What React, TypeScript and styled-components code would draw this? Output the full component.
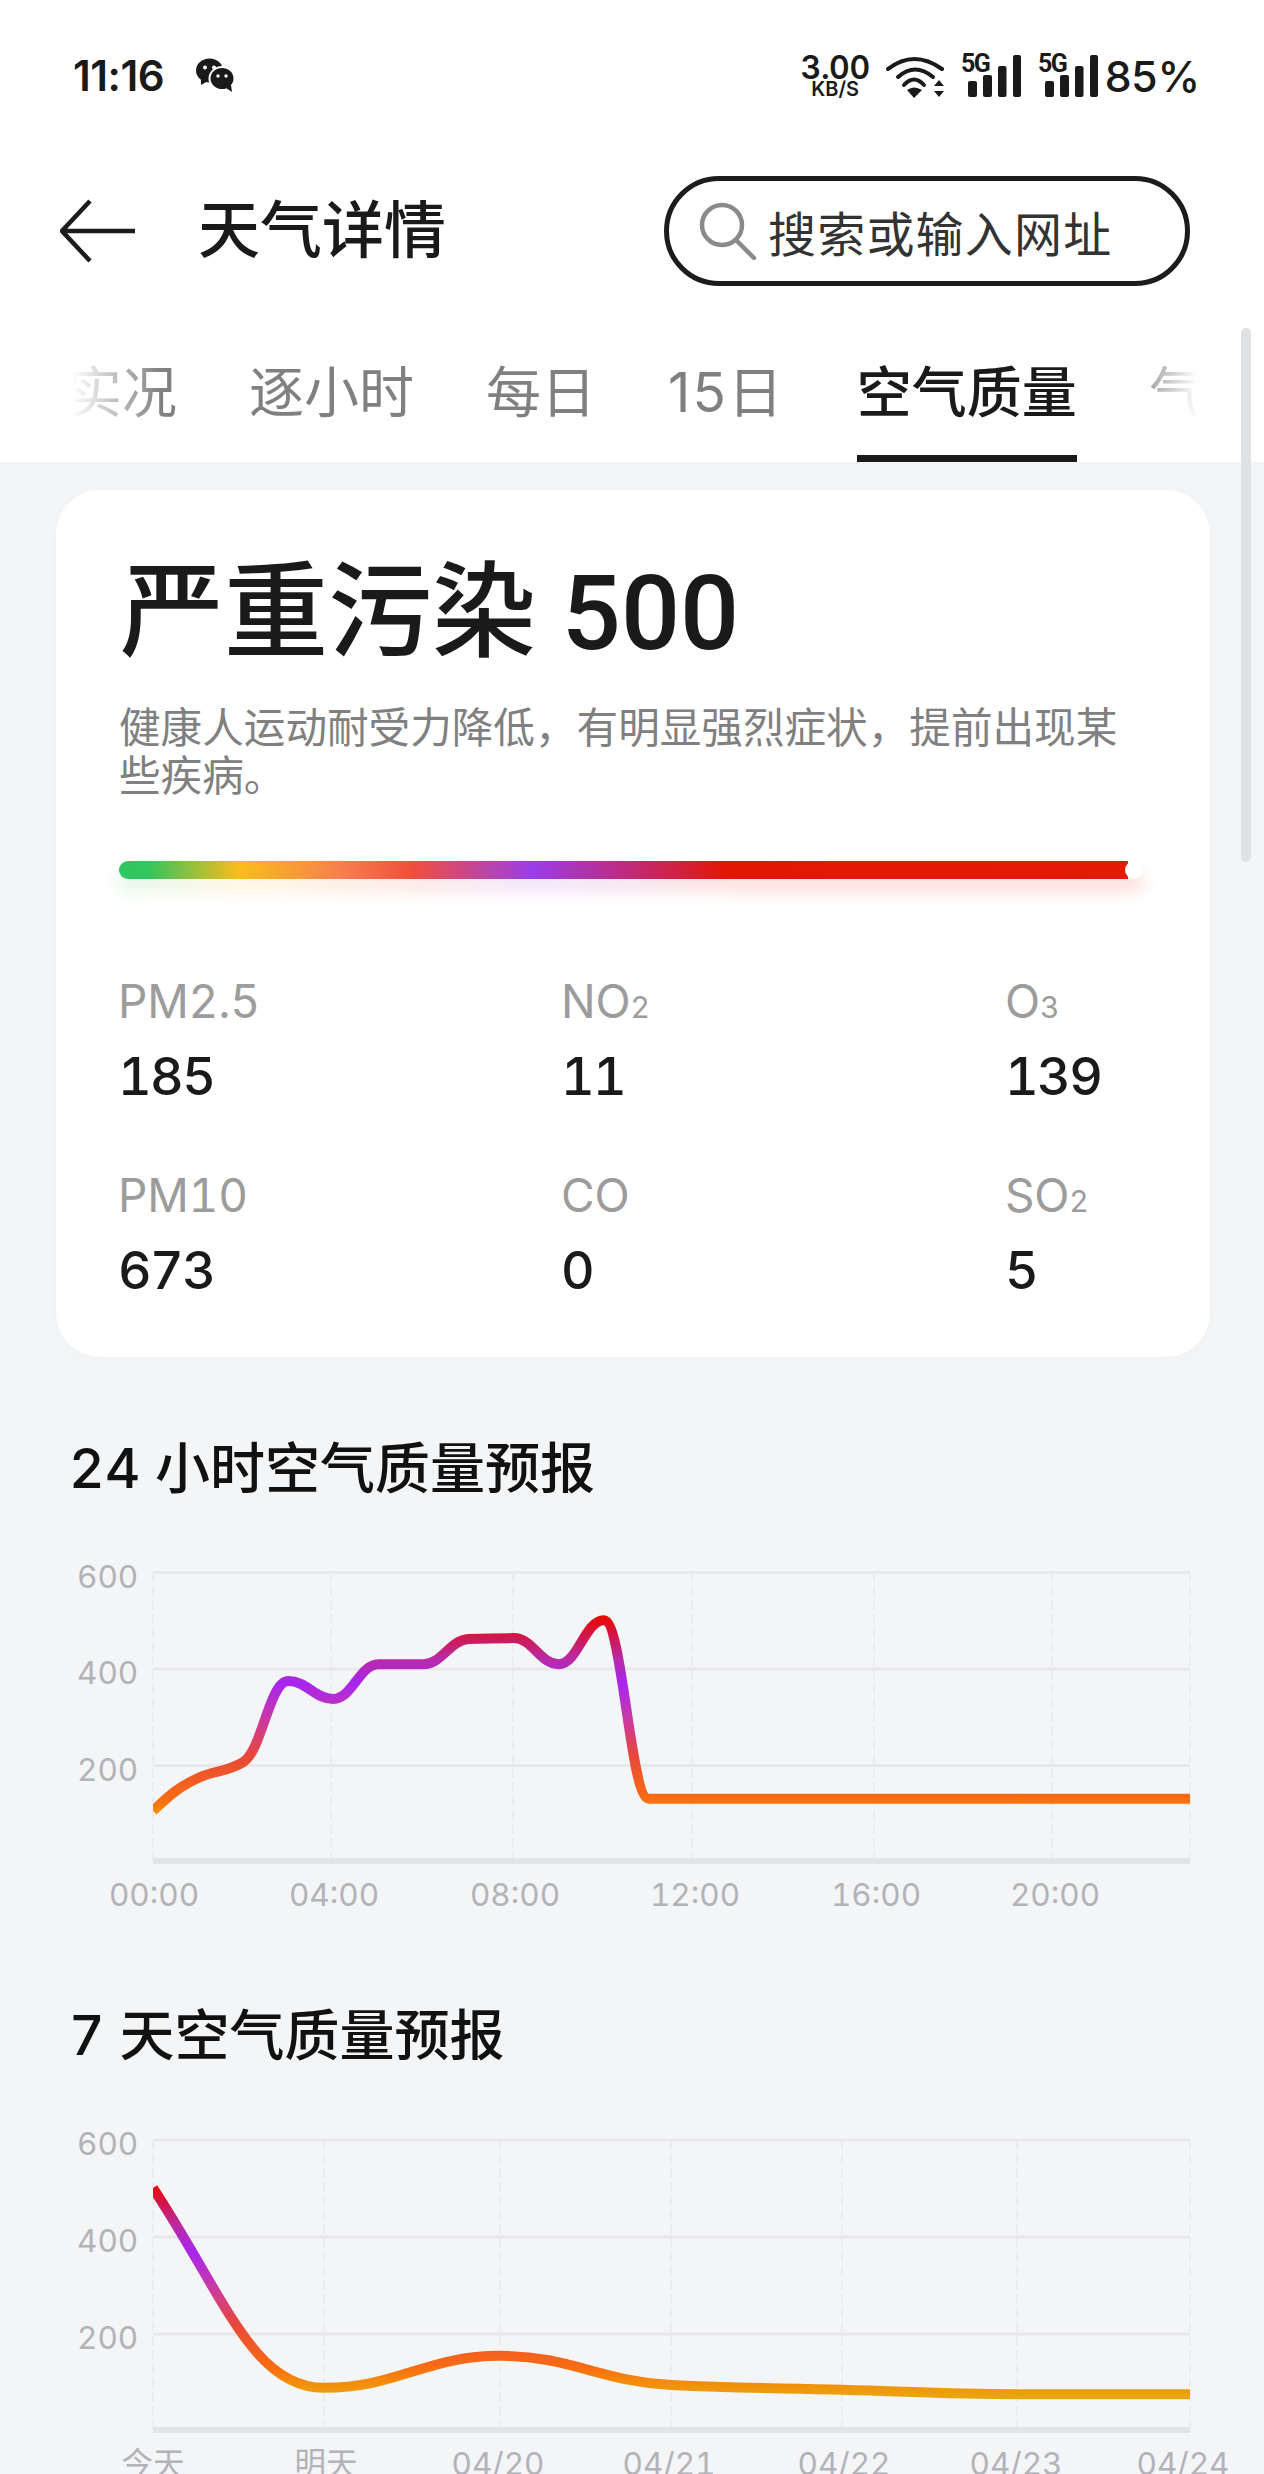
import React from 'react';
import styled, { createGlobalStyle } from 'styled-components';

const Global = createGlobalStyle`
  html, body { margin: 0; padding: 0; height: 2474px; overflow: hidden; background: #f4f5f7; }
  body {
    font-family: Inter, "Noto Sans CJK SC", sans-serif;
    font-variant-numeric: tabular-nums;
    color: #1a1a1a;
  }
`;

const Page = styled.div`
  position: relative;
  width: 1264px;
  height: 2474px;
  overflow: hidden;
`;

const Header = styled.header`
  background: #fff;
  height: 462px;
`;

const StatusBar = styled.div`
  height: 150px;
  padding: 0 65px 0 73px;
  box-sizing: border-box;
  display: flex;
  align-items: center;
`;

const Time = styled.span`
  font-size: 42px;
  font-weight: 600;
  font-variant-numeric: normal;
  letter-spacing: -0.5px;
  margin-right: 32px;
`;

const StatusRight = styled.div`
  margin-left: auto;
  display: flex;
  align-items: center;
  margin-top: 2px;
`;

const Speed = styled.div`
  width: 70px;
  display: flex;
  flex-direction: column;
  align-items: center;
  font-weight: 600;
  margin-right: 16px;
  strong { font-size: 32px; line-height: 27px; font-weight: 600; letter-spacing: -0.4px; }
  span { font-size: 20px; line-height: 17px; }
`;

const SignalWrap = styled.svg`
  display: block;
  margin-left: 17px;
  overflow: visible;
  text {
    font-family: Roboto, sans-serif;
    font-weight: 700;
    font-size: 25px;
    letter-spacing: -1.6px;
    fill: #1a1a1a;
  }
`;

const Battery = styled.span`
  font-size: 43px;
  font-weight: 500;
  letter-spacing: -1.2px;
  margin-left: 6px;
`;

const NavRow = styled.div`
  margin-top: 26px;
  height: 110px;
  padding: 0 74px 0 60px;
  display: flex;
  align-items: center;
`;

const NavTitle = styled.h1`
  margin: 0 0 0 62px;
  font-size: 62px;
  font-weight: 500;
  line-height: 1;
  color: #1a1a1a;
`;

const SearchBox = styled.div`
  margin-left: auto;
  width: 526px;
  height: 110px;
  box-sizing: border-box;
  border: 5px solid #1c1c1c;
  border-radius: 55px;
  display: flex;
  align-items: center;
  padding-left: 28px;
  span {
    margin-left: 11px;
    font-size: 48px;
    letter-spacing: 1.2px;
    color: #333;
  }
`;

const TabStrip = styled.nav`
  margin: 68px 66px 0 71px;
  height: 108px;
  overflow: hidden;
  display: flex;
  gap: 72px;
  -webkit-mask-image: linear-gradient(to right, transparent 0, #000 90px, #000 calc(100% - 70px), transparent 100%);
  mask-image: linear-gradient(to right, transparent 0, #000 90px, #000 calc(100% - 70px), transparent 100%);
`;

const Tab = styled.div<{ $active?: boolean; $track?: number }>`
  flex: none;
  height: 108px;
  box-sizing: border-box;
  padding-bottom: 25px;
  line-height: 76px;
  font-size: 55px;
  font-variant-numeric: normal;
  letter-spacing: ${p => p.$track || 0}px;
  font-weight: ${p => (p.$active ? 500 : 400)};
  color: ${p => (p.$active ? '#1a1a1a' : '#808080')};
  border-bottom: 7px solid ${p => (p.$active ? '#1a1a1a' : 'transparent')};
  &:first-child { margin-left: -4px; }
`;

const Scrollbar = styled.div`
  position: absolute;
  left: 1241px;
  top: 328px;
  width: 10px;
  height: 534px;
  border-radius: 5px;
  background: #e0e1e3;
`;

const Card = styled.section`
  margin: 28px 54px 0 56px;
  padding: 62px 64px 54px 62px;
  background: #fff;
  border-radius: 44px;
  box-shadow: 0 2px 14px rgba(0, 0, 0, 0.02);
`;

const Level = styled.h2`
  margin: 0 0 0 2px;
  font-family: Roboto, "Noto Sans CJK SC", sans-serif;
  font-size: 104px;
  line-height: 124px;
  font-weight: 500;
  color: #1a1a1a;
  white-space: nowrap;
`;

const Advice = styled.p`
  margin: 28px 0 0 1px;
  font-size: 41.6px;
  line-height: 48px;
  color: #808080;
`;

const Scale = styled.div`
  position: relative;
  margin: 61px 0 0 1px;
  width: 1009px;
  height: 18px;
`;

const ScaleTrack = styled.div`
  position: relative;
  height: 18px;
  border-radius: 9px 0 0 9px;
  background: linear-gradient(to right, #2ec763 0%, #36c45c 3%, #fcbc1c 12%, #f57f4f 22%, #f0503a 29%, #9b3de8 41%, #d3203a 56%, #e31605 60%, #e51a05 100%);
`;

const ScaleGlow = styled.div`
  position: absolute;
  left: 0;
  right: -14px;
  top: 12px;
  height: 18px;
  opacity: 0.16;
  filter: blur(9px);
  background: linear-gradient(to right, #2ec763 0%, #fcbc1c 12%, #f0503a 29%, #9b3de8 41%, #e51a05 60%, #e51a05 100%);
`;

const Knob = styled.div`
  position: absolute;
  right: -15px;
  top: 0;
  width: 18px;
  height: 18px;
  border-radius: 50%;
  background: #fff;
`;

const StatGrid = styled.div`
  margin-top: 93px;
  display: grid;
  grid-template-columns: 443px 444px auto;
  row-gap: 57px;
`;

const StatLabel = styled.div`
  font-size: 46px;
  line-height: 58px;
  letter-spacing: -0.2px;
  color: #9c9c9c;
  sub { font-size: 30px; vertical-align: baseline; line-height: 0; }
`;

const StatValue = styled.div`
  margin-top: 15px;
  font-size: 52px;
  line-height: 64px;
  letter-spacing: -1.6px;
  font-weight: 500;
  color: #1a1a1a;
`;

const SectionTitle = styled.h3<{ $gap: number }>`
  margin: ${p => p.$gap}px 0 0 69px;
  font-size: 55px;
  line-height: 80px;
  font-weight: 500;
  color: #111;
`;

const ChartSvg = styled.svg<{ $gap: number }>`
  display: block;
  margin-top: ${p => p.$gap}px;
  overflow: visible;
  text {
    font-family: Inter, "Noto Sans CJK SC", sans-serif;
    font-size: 31.5px;
    font-variant-numeric: tabular-nums;
    fill: #b2b3b8;
  }
`;

const LEFT = 153;
const RIGHT = 1190;

// colour of the line by AQI value, top of the scale first
const colorStops: [number, string][] = [
  [505, '#e80808'],
  [465, '#d01850'],
  [420, '#b82aa8'],
  [370, '#a826ee'],
  [300, '#c838a8'],
  [220, '#e8483a'],
  [131, '#f86c12'],
  [105, '#f5880a'],
  [70, '#e8a60f'],
];

// monotone cubic so the line does not overshoot around the flat runs
function smoothPath(pts: [number, number][]) {
  const n = pts.length;
  const slopes: number[] = [];
  for (let i = 0; i < n - 1; i++) {
    slopes.push((pts[i + 1][1] - pts[i][1]) / (pts[i + 1][0] - pts[i][0]));
  }
  const tan: number[] = [slopes[0] * 1.3];
  for (let i = 1; i < n - 1; i++) {
    const a = slopes[i - 1];
    const b = slopes[i];
    tan.push(a * b <= 0 ? 0 : (2 * a * b) / (a + b));
  }
  tan.push(0);
  let d = `M${pts[0][0]} ${pts[0][1]}`;
  for (let i = 0; i < n - 1; i++) {
    const h = (pts[i + 1][0] - pts[i][0]) / 2.4;
    d += ` C${pts[i][0] + h} ${pts[i][1] + tan[i] * h} ${pts[i + 1][0] - h} ${pts[i + 1][1] - tan[i + 1] * h} ${pts[i + 1][0]} ${pts[i + 1][1]}`;
  }
  return d;
}

interface ChartProps {
  id: string;
  gap: number;
  zeroY: number;
  unit: number;
  xs: number[];
  values: number[];
  grid: number[];
  labels: { x: number; text: string }[];
  labelY: number;
}

function Chart({ id, gap, zeroY, unit, xs, values, grid, labels, labelY }: ChartProps) {
  const y = (v: number) => zeroY - v * unit;
  const pts = values.map((v, i) => [xs[i], y(v)] as [number, number]);
  return (
    <ChartSvg $gap={gap} width={1264} height={370} viewBox="0 0 1264 370">
      <defs>
        <linearGradient id={`${id}-line`} gradientUnits="userSpaceOnUse" x1="0" x2="0" y1={y(505)} y2={y(70)}>
          {colorStops.map(([v, c]) => (
            <stop key={v} offset={(505 - v) / 435} stopColor={c} />
          ))}
        </linearGradient>
        <clipPath id={`${id}-clip`}>
          <rect x={LEFT} y={0} width={RIGHT - LEFT} height={370} />
        </clipPath>
      </defs>
      {[200, 400, 600].map(v => (
        <React.Fragment key={v}>
          <line x1={LEFT} x2={RIGHT} y1={y(v)} y2={y(v)} stroke="#e7e8ea" strokeWidth={3} />
          <text x={77} y={y(v) + 15}>{v}</text>
        </React.Fragment>
      ))}
      {[LEFT, ...grid, RIGHT].map(x => (
        <line key={x} x1={x} x2={x} y1={y(600)} y2={zeroY} stroke="#e8e9eb" strokeWidth={1.5} strokeDasharray="9 5" />
      ))}
      <line x1={LEFT} x2={RIGHT} y1={zeroY - 1} y2={zeroY - 1} stroke="#e3e4e6" strokeWidth={6} />
      <path d={smoothPath(pts)} fill="none" stroke={`url(#${id}-line)`} strokeWidth={10} strokeLinejoin="round" clipPath={`url(#${id}-clip)`} />
      {labels.map(l => (
        <text key={l.text} x={l.x} y={labelY} textAnchor="middle">{l.text}</text>
      ))}
    </ChartSvg>
  );
}

const hourValues = [106, 174, 207, 375, 338, 410, 410, 462, 464, 410, 501, 131, 131, 131, 131, 131, 131, 131, 131, 131, 131, 131, 131, 131];
const hourXs = hourValues.map((_, i) => LEFT + (i * (RIGHT - LEFT)) / 23);

const dayXs = [LEFT, 324, 500, 671, 842, 1017, RIGHT];
const dayValues = [501, 89, 155, 95, 85, 76, 76];

const stats: { label: string; sub?: string; value: string }[] = [
  { label: 'PM2.5', value: '185' },
  { label: 'NO', sub: '2', value: '11' },
  { label: 'O', sub: '3', value: '139' },
  { label: 'PM10', value: '673' },
  { label: 'CO', value: '0' },
  { label: 'SO', sub: '2', value: '5' },
];

function SignalIcon() {
  return (
    <SignalWrap width={60} height={44} viewBox="0 0 60 44">
      <text x={0} y={18}>5G</text>
      <rect x={7} y={27} width={9} height={16} rx={2} fill="#1a1a1a" />
      <rect x={22} y={21} width={9} height={22} rx={2} fill="#1a1a1a" />
      <rect x={37} y={12} width={8.5} height={31} rx={2} fill="#1a1a1a" />
      <rect x={52} y={1} width={8} height={42} rx={2} fill="#1a1a1a" />
    </SignalWrap>
  );
}

export default function App() {
  return (
    <Page>
      <Global />
      <Header>
        <StatusBar>
          <Time>11:16</Time>
          <svg width="38" height="34" viewBox="0 0 38 34">
            <ellipse cx="13.5" cy="12.5" rx="13.5" ry="12" fill="#1a1a1a" />
            <path d="M5 20 L5 27 L12 23Z" fill="#1a1a1a" />
            <circle cx="9" cy="9.5" r="2" fill="#fff" />
            <circle cx="18" cy="9.5" r="2" fill="#fff" />
            <ellipse cx="26" cy="20.5" rx="12.5" ry="11.5" fill="#1a1a1a" stroke="#fff" strokeWidth="2" />
            <path d="M30 30 L36 34 L35 27Z" fill="#1a1a1a" />
            <circle cx="22" cy="18" r="1.7" fill="#fff" />
            <circle cx="30" cy="18" r="1.7" fill="#fff" />
          </svg>
          <StatusRight>
            <Speed>
              <strong>3.00</strong>
              <span>KB/S</span>
            </Speed>
            <svg width="58" height="43" viewBox="0 0 58 43" fill="none">
              <path d="M2 14 Q28 -6 56 14" stroke="#1a1a1a" strokeWidth="4" strokeLinecap="round" />
              <path d="M12 22 Q29 7 47 22" stroke="#1a1a1a" strokeWidth="4" strokeLinecap="round" />
              <path d="M18 30 Q28 19 38 30" stroke="#1a1a1a" strokeWidth="4" strokeLinecap="round" />
              <path d="M21 35 Q28 30 36 35 L28 43Z" fill="#1a1a1a" />
              <path d="M48 31 L53 25 L58 31Z M48 36 L58 36 L53 42Z" fill="#1a1a1a" />
            </svg>
            <SignalIcon />
            <SignalIcon />
            <Battery>85%</Battery>
          </StatusRight>
        </StatusBar>

        <NavRow>
          <svg width="76" height="64" viewBox="0 0 76 64" fill="none">
            <path d="M30 2 L2 32 L30 62 M3 32 H75" stroke="#1c1c1c" strokeWidth="4.5" />
          </svg>
          <NavTitle>天气详情</NavTitle>
          <SearchBox>
            <svg width="60" height="58" viewBox="0 0 60 58" fill="none">
              <circle cx="25" cy="23" r="20" stroke="#8a8a8a" strokeWidth="4.5" />
              <path d="M39 38 L57 56" stroke="#8a8a8a" strokeWidth="4.5" strokeLinecap="round" />
            </svg>
            <span>搜索或输入网址</span>
          </SearchBox>
        </NavRow>

        <TabStrip>
          <Tab>实况</Tab>
          <Tab>逐小时</Tab>
          <Tab>每日</Tab>
          <Tab $track={2}>15日</Tab>
          <Tab $active>空气质量</Tab>
          <Tab>气候</Tab>
        </TabStrip>
      </Header>

      <Scrollbar />

      <Card>
        <Level>严重污染 500</Level>
        <Advice>健康人运动耐受力降低，有明显强烈症状，提前出现某些疾病。</Advice>
        <Scale>
          <ScaleGlow />
          <ScaleTrack />
          <Knob />
        </Scale>
        <StatGrid>
          {stats.map(s => (
            <div key={s.label + (s.sub || '')}>
              <StatLabel>
                {s.label}
                {s.sub && <sub>{s.sub}</sub>}
              </StatLabel>
              <StatValue>{s.value}</StatValue>
            </div>
          ))}
        </StatGrid>
      </Card>

      <SectionTitle $gap={71}>24 小时空气质量预报</SectionTitle>
      <Chart
        id="hours"
        gap={42}
        zeroY={312}
        unit={0.4825}
        xs={hourXs}
        values={hourValues}
        grid={[331, 513, 692, 874, 1052]}
        labels={[
          { x: 154, text: '00:00' },
          { x: 334, text: '04:00' },
          { x: 515, text: '08:00' },
          { x: 695, text: '12:00' },
          { x: 876, text: '16:00' },
          { x: 1055, text: '20:00' },
        ]}
        labelY={356}
      />

      <SectionTitle $gap={75}>7 天空气质量预报</SectionTitle>
      <Chart
        id="days"
        gap={40}
        zeroY={316}
        unit={0.485}
        xs={dayXs}
        values={dayValues}
        grid={[324, 500, 671, 842, 1017]}
        labels={[
          { x: 153, text: '今天' },
          { x: 326, text: '明天' },
          { x: 498, text: '04/20' },
          { x: 669, text: '04/21' },
          { x: 844, text: '04/22' },
          { x: 1016, text: '04/23' },
          { x: 1183, text: '04/24' },
        ]}
        labelY={360}
      />
    </Page>
  );
}
